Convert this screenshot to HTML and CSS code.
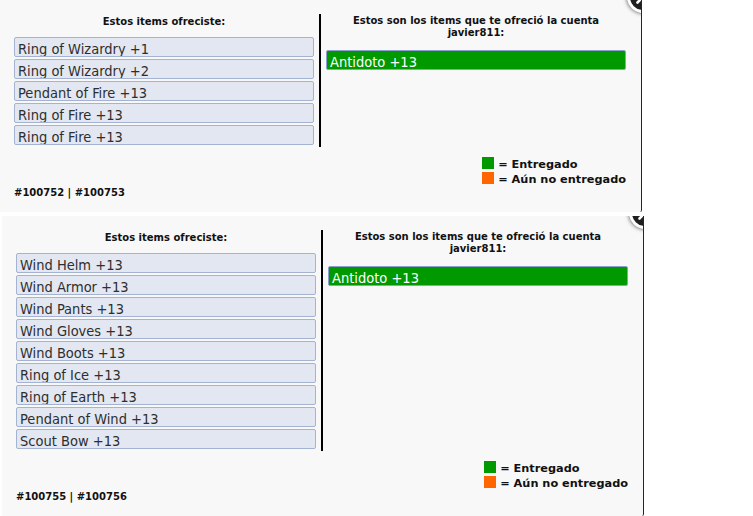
FILE: index.html
```html
<!DOCTYPE html>
<html lang="es">
<head>
<meta charset="utf-8">
<title>Intercambio</title>
<link rel="stylesheet" href="styles.css">
</head>
<body>
<div class="page">
  <section class="panel">
    <button class="close" type="button" aria-label="Cerrar"><svg class="close-icon" viewBox="0 0 26 26" width="26" height="26"><path d="M7.5 7.5 L18.5 18.5 M18.5 7.5 L7.5 18.5" stroke="#fff" stroke-width="2.6" stroke-linecap="round" fill="none"/></svg></button>
    <div class="cols">
      <div class="col col-left">
        <h3 class="col-title">Estos items ofreciste:</h3>
        <ul class="items">
          <li class="item">Ring of Wizardry +1</li>
          <li class="item">Ring of Wizardry +2</li>
          <li class="item">Pendant of Fire +13</li>
          <li class="item">Ring of Fire +13</li>
          <li class="item">Ring of Fire +13</li>
        </ul>
      </div>
      <div class="col col-right">
        <h3 class="col-title col-title-right">Estos son los items que te ofreció la cuenta<br>javier811:</h3>
        <ul class="items">
          <li class="item item-done">Antidoto +13</li>
        </ul>
      </div>
    </div>
    <div class="legend-row">
      <div class="legend">
        <div class="legend-line"><span class="sw sw-green"></span> = Entregado</div>
        <div class="legend-line"><span class="sw sw-orange"></span> = Aún no entregado</div>
      </div>
    </div>
    <div class="ids">#100752 | #100753</div>
  </section>

  <section class="panel panel-shift">
    <button class="close" type="button" aria-label="Cerrar"><svg class="close-icon" viewBox="0 0 26 26" width="26" height="26"><path d="M7.5 7.5 L18.5 18.5 M18.5 7.5 L7.5 18.5" stroke="#fff" stroke-width="2.6" stroke-linecap="round" fill="none"/></svg></button>
    <div class="cols">
      <div class="col col-left">
        <h3 class="col-title">Estos items ofreciste:</h3>
        <ul class="items">
          <li class="item">Wind Helm +13</li>
          <li class="item">Wind Armor +13</li>
          <li class="item">Wind Pants +13</li>
          <li class="item">Wind Gloves +13</li>
          <li class="item">Wind Boots +13</li>
          <li class="item">Ring of Ice +13</li>
          <li class="item">Ring of Earth +13</li>
          <li class="item">Pendant of Wind +13</li>
          <li class="item">Scout Bow +13</li>
        </ul>
      </div>
      <div class="col col-right">
        <h3 class="col-title col-title-right">Estos son los items que te ofreció la cuenta<br>javier811:</h3>
        <ul class="items">
          <li class="item item-done">Antidoto +13</li>
        </ul>
      </div>
    </div>
    <div class="legend-row">
      <div class="legend">
        <div class="legend-line"><span class="sw sw-green"></span> = Entregado</div>
        <div class="legend-line"><span class="sw sw-orange"></span> = Aún no entregado</div>
      </div>
    </div>
    <div class="ids">#100755 | #100756</div>
  </section>
</div>
</body>
</html>
```

FILE: styles.css
```css
html, body {
  margin: 0;
  padding: 0;
  background: #ffffff;
  overflow: hidden;
}

body {
  font-family: "DejaVu Sans", Verdana, sans-serif;
  color: #111;
}

.page {
  display: flex;
  flex-direction: column;
  align-items: flex-start;
  gap: 4px;
}

.panel {
  position: relative;
  overflow: hidden;
  width: 641px;
  padding: 14px 0 13px 0;
  background: #f8f8f8;
  border-right: 1px solid #262626;
  border-bottom-right-radius: 2px;
}

.panel-shift {
  margin-left: 2px;
}

.close {
  position: absolute;
  top: -19px;
  right: -18px;
  width: 32px;
  height: 32px;
  padding: 0;
  border: 3px solid #ffffff;
  border-radius: 50%;
  background: #1f1f1f;
  box-shadow: 0 0 4px rgba(0, 0, 0, 0.7);
  display: flex;
  align-items: center;
  justify-content: center;
}

.close-icon {
  display: block;
}

.cols {
  display: flex;
  align-items: flex-start;
}

.col-left {
  width: 300px;
  padding: 0 5px 0 14px;
  border-right: 2px solid #000;
}

.col-right {
  width: 300px;
  padding: 0 15px 0 5px;
}

.col-title {
  margin: 2px 0 9px;
  font-size: 10px;
  line-height: 12px;
  font-weight: bold;
  text-align: center;
  color: #111;
}

.col-title-right {
  margin: 1px 0 11px;
}

.items {
  list-style: none;
  margin: 0;
  padding: 0;
}

.item {
  height: 18px;
  margin-bottom: 2px;
  padding-left: 3px;
  overflow: hidden;
  white-space: nowrap;
  border: 1px solid #a4b3d2;
  border-radius: 2px;
  background: #e3e7f1;
  font-family: "DejaVu Sans Condensed", "DejaVu Sans", sans-serif;
  font-size: 14.5px;
  line-height: 22px;
  color: #2e2e2e;
}

.item-done {
  background: #009900;
  border-color: #8c9ecb;
  color: #ffffff;
}

.legend-row {
  display: flex;
  justify-content: flex-end;
  padding-right: 15px;
  margin-top: 10px;
}

.legend {
  font-size: 11.3px;
  line-height: 15px;
  font-weight: bold;
  color: #111;
  white-space: nowrap;
}

.legend-line {
  height: 15px;
}

.sw {
  display: inline-block;
  width: 12px;
  height: 12px;
  vertical-align: -1px;
}

.sw-green {
  background: #009900;
}

.sw-orange {
  background: #ff6600;
}

.ids {
  padding-left: 14px;
  font-size: 10px;
  line-height: 12px;
  font-weight: bold;
  color: #111;
}
```
